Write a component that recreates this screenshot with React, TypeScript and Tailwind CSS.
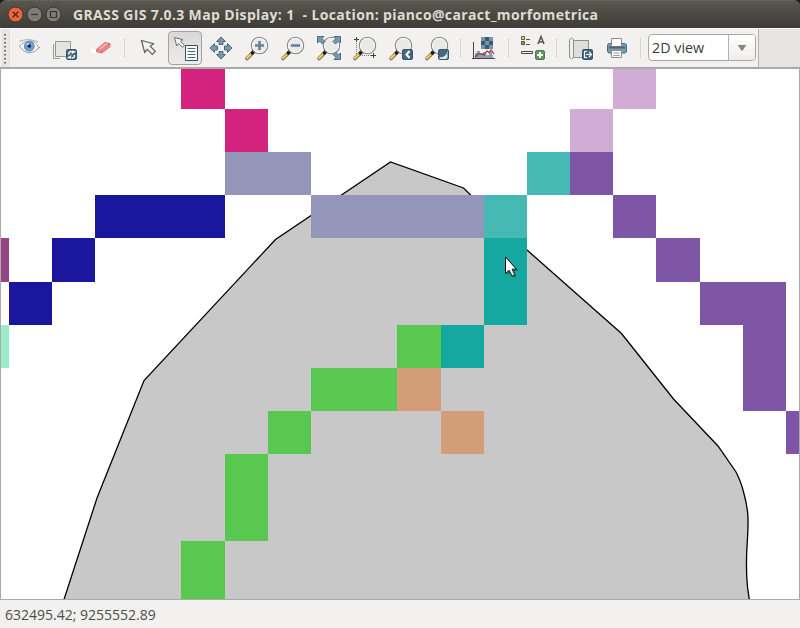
import React from "react";

type Cell = [number, number, number, number, string];

const cells: Cell[] = [
  [181, 69, 44, 40, "#d3237f"],
  [225, 109, 43, 43, "#d3237f"],
  [225, 152, 86, 43, "#9395b9"],
  [311, 195, 173, 43, "#9395b9"],
  [95, 195, 130, 43, "#1b169e"],
  [52, 238, 43, 44, "#1b169e"],
  [9, 282, 43, 43, "#1b169e"],
  [1, 238, 8, 44, "#964283"],
  [1, 325, 8, 43, "#9aebca"],
  [484, 195, 43, 43, "#46b9b4"],
  [527, 152, 43, 43, "#46b9b4"],
  [484, 238, 43, 87, "#14a8a0"],
  [441, 325, 43, 43, "#14a8a0"],
  [397, 325, 44, 43, "#58c850"],
  [311, 368, 86, 43, "#58c850"],
  [268, 411, 43, 43, "#58c850"],
  [225, 454, 43, 87, "#58c850"],
  [181, 541, 44, 58, "#58c850"],
  [397, 368, 44, 43, "#d49d79"],
  [441, 411, 43, 43, "#d49d79"],
  [613, 69, 43, 40, "#d1add6"],
  [570, 109, 43, 43, "#d1add6"],
  [570, 152, 43, 43, "#7f55a6"],
  [613, 195, 43, 43, "#7f55a6"],
  [656, 238, 44, 44, "#7f55a6"],
  [700, 282, 86, 43, "#7f55a6"],
  [743, 325, 43, 86, "#7f55a6"],
  [786, 411, 13, 43, "#7f55a6"],
];

function MapCanvas() {
  return (
    <svg className="block h-[530px] w-[798px]" viewBox="1 69 798 530">
      <path
        d="M63.5 601L97 498L144 380.500L275.500 239.500L390.500 162L463.500 188L527 250L621.500 333.500L673.500 399L718 446L736 472Q741 482 743 490C749 511 748.500 521 747.500 538C746 558 746.500 577 747.500 587L749.500 601"
        fill="#c8c8c8"
        stroke="#000"
        strokeWidth="1.3"
      />
      {cells.map(([x, y, w, h, c]) => (
        <rect key={`${x}-${y}`} x={x} y={y} width={w} height={h} fill={c} shapeRendering="crispEdges" />
      ))}
      <path d="M507 258v17l3.500-3l3 5.500l3-1.500l-2.500-5h4.500z" fill="#000" opacity=".3" />
      <path d="M505.500 257v16.500l3.700-3.200l2.800 5.700l2.800-1.300l-2.700-5.500h4.300z" fill="#fff" stroke="#111" strokeWidth="1" />
    </svg>
  );
}

/* Each tool draws in window coordinates; x is the left edge of its slot. */
function Tool({ x, children }: { x: number; children: React.ReactNode }) {
  return (
    <svg className="block h-[38px] w-9 shrink-0" viewBox={`${x} 29 36 38`}>
      {children}
    </svg>
  );
}

function Separator() {
  return (
    <div className="flex h-[38px] w-3 shrink-0 items-center pl-[5px]">
      <div className="h-5 w-px bg-[#d6d5d3]" />
    </div>
  );
}

function Lens({ cx, children }: { cx: number; children?: React.ReactNode }) {
  return (
    <>
      <path d={`M${cx - 12.5} 58.500l6.500-6.500`} stroke="#6a665c" strokeWidth="3.600" strokeLinecap="round" />
      <path d={`M${cx - 12.5} 58.300l5-5`} stroke="#f6cf45" strokeWidth="2.200" strokeLinecap="round" />
      <path d={`M${cx - 7.2} 53l1.400-1.400`} stroke="#1c1c1c" strokeWidth="3.400" strokeLinecap="round" />
      <circle cx={cx} cy="45.500" r="8.200" fill="#e9e9e8" stroke="#858583" strokeWidth="1.100" />
      <circle cx={cx} cy="45.500" r="7" fill="none" stroke="#fafafa" strokeWidth="1" />
      {children}
    </>
  );
}

function Badge({ x, y, children }: { x: number; y: number; children: React.ReactNode }) {
  return (
    <g>
      <rect x={x} y={y} width="10" height="10" rx="1.500" fill="#466980" stroke="#34566c" />
      {children}
    </g>
  );
}

const blue = { fill: "#7899ae", stroke: "#4a6c82", strokeWidth: 1 };

function Toolbar() {
  return (
    <div className="flex h-10 border-t border-b border-t-[#fbfbfa] border-b-[#aaa9a7] bg-[#e5e4e2]">
      <div className="flex h-[38px] w-[759px] border-r border-[#b5b4b2] bg-[#f2f1f0]">
        <svg className="block h-[38px] w-[11px] shrink-0" viewBox="0 29 11 38">
          <path d="M1 29h9v38H1z" fill="#e6e5e3" />
          <path d="M5 34v30" stroke="#6b6b69" strokeWidth="2" strokeDasharray="1.500 2.500" />
        </svg>
        <Tool x={11}>
          <path d="M19.500 47q3-5.500 9.500-6q7 0 10 6.500q-9.500 9.500-19.500-.5z" fill="#fff" />
          <path d="M19.300 41.500q9-4 18.700.5" fill="none" stroke="#a2a2a1" strokeWidth=".9" />
          <path d="M19 47q4-5.700 10-6q6.500 0 9.300 6l1.900.8M19.300 46q9 13 20 1.700" fill="none" stroke="#8f8f8e" strokeWidth=".9" />
          <circle cx="29.300" cy="46.300" r="5" fill="#6a9dd6" stroke="#4a7db8" strokeWidth=".7" />
          <circle cx="29.300" cy="46" r="1.800" fill="#14243a" />
          <circle cx="27.700" cy="44.300" r="1" fill="#dcecff" />
        </Tool>
        <Tool x={47}>
          <path d="M53.500 44v14.500H60" fill="none" stroke="#999" />
          <path d="M55.500 41.500h15v15h-15z" fill="#e4e4e3" stroke="#949492" />
          <Badge x={66.500} y={49.500}>
            <path d="M68.800 54.500q-.5-3 3-3M74.500 55q.5 3-3 3" fill="none" stroke="#fff" strokeWidth="1.400" />
            <path d="M71.500 54.300v-3.800h3.800zM71.500 55v3.800h-3.800z" fill="#fff" transform="rotate(12 71.500 54.500)" />
          </Badge>
        </Tool>
        <Tool x={83}>
          <path d="M91 49h9v4h-9z" fill="#fff" />
          <path d="M96.500 49.500l8.500-7l5 1.200v3l-8 6.300l-5.500-1.200z" fill="#ec9290" stroke="#d96c6c" />
          <path d="M97 49.500l5 1.200v2.300M102 50.500l8-6.500" fill="none" stroke="#d96c6c" strokeWidth=".8" />
          <path d="M99.500 49l7-5.500" stroke="#fbd0cf" />
        </Tool>
        <Separator />
        <Tool x={131}>
          <path d="M141.500 40.500l12 3.200l-3.200 2.600l5 5l-3 3l-5-5l-2.600 3.200z" fill="#f3f3f2" stroke="#5c5c5a" strokeWidth="1.200" />
        </Tool>
        <div className="flex h-[38px] w-9 shrink-0 items-center justify-center">
          <div className="flex h-[34px] w-[34px] items-center justify-center overflow-hidden rounded border border-[#a5a39f] bg-linear-to-b from-[#d9d8d5] to-[#edecea]">
            <svg className="block h-[38px] w-9 shrink-0" viewBox="167 29 36 38">
              <path d="M174.500 37.500l8.500 2.200l-2.300 1.800l3.800 3.800l-2 2l-3.800-3.800l-2 2.500z" fill="#f3f3f2" stroke="#6c6c6a" />
              <path d="M185.500 45.500h12v15h-12z" fill="#fff" stroke="#2f536a" />
              <path d="M187.500 48.500h8m-8 3h8m-8 3h8m-8 3h8" stroke="#466a83" />
            </svg>
          </div>
        </div>
        <Tool x={203}>
          <g {...blue}>
            <path d="M221 37l4.500 4.500h-2.500v3h-4v-3h-2.500z" />
            <path d="M221 59l4.500-4.500h-2.500v-3h-4v3h-2.500z" />
            <path d="M210 48l4.500-4.500v2.500h3v4h-3v2.500z" />
            <path d="M232 48l-4.500-4.500v2.500h-3v4h3v2.500z" />
          </g>
        </Tool>
        <Tool x={239}>
          <Lens cx={259.500}><path d="M255 45.500h9M259.500 41v9" stroke="#618399" strokeWidth="2.600" /></Lens>
        </Tool>
        <Tool x={275}>
          <Lens cx={295.500}><path d="M291 45.500h9" stroke="#618399" strokeWidth="2.600" /></Lens>
        </Tool>
        <Tool x={311}>
          <Lens cx={331.500} />
          <g {...blue}>
            <path d="M317.500 36.500h6.500l-2 2l3 3l-2.500 2.500l-3-3l-2 2z" />
            <path d="M340.500 36.500h-6.500l2 2l-3 3l2.500 2.500l3-3l2 2z" />
            <path d="M340.500 59.500h-6.500l2-2l-3-3l2.500-2.500l3 3l2-2z" />
          </g>
        </Tool>
        <Tool x={347}>
          <path d="M356.500 43v12.500H371" fill="none" stroke="#777" strokeDasharray="1 1" />
          <Lens cx={367.500} />
          <path d="M354 39.500h5M356.500 37v5M371 55.500h5M373.500 53v5" stroke="#3d3d3d" />
        </Tool>
        <Tool x={383}>
          <Lens cx={403.500} />
          <Badge x={402.500} y={49.500}><path d="M409.500 51l-3 3.500l3 3.500" fill="none" stroke="#fff" strokeWidth="2" /></Badge>
        </Tool>
        <Tool x={419}>
          <Lens cx={439.500} />
          <Badge x={438.500} y={49.500}><path d="M439.500 57.500q7 0 8-7v6q0 2.500-2.500 2.500h-5.500z" fill="#e0e8ed" /></Badge>
        </Tool>
        <Separator />
        <Tool x={467}>
          <path d="M481 37h12v12h-12z" fill="#7894a7" />
          <path d="M485 37h4v4h-4zM489 41h4v4h-4zM481 41h4v4h-4zM485 45h4v4h-4z" fill="#385a70" />
          <path d="M475 58v-5h2v-2h3v2h3v-1h3v3h3v-3h3v3h1v3z" fill="#86a1b4" />
          <path d="M473.500 42v17M472 58.500h23" stroke="#444" />
          <path d="M475 57l3-3h4l2 1l3-4l2 1.500l2-2.500l3 4" fill="none" stroke="#b51e2d" strokeWidth="1.200" />
        </Tool>
        <Separator />
        <Tool x={515}>
          <path d="M521.500 36.500h3v3h-3z" fill="#f5e636" stroke="#555" />
          <path d="M521.500 41.500h3v3h-3z" fill="#dd6e67" stroke="#555" />
          <path d="M526 39.500h4M526 44.500h4" stroke="#555" />
          <path d="M521.500 51.500h11v2h-11z" fill="#fff" stroke="#444" />
          <path d="M538 44l3-7.300l3 7.300M539 42h4" fill="none" stroke="#5a5a58" strokeWidth="1.600" />
          <rect x="535.500" y="50.500" width="9" height="9" rx="1.500" fill="#5f9760" stroke="#4b7f4e" />
          <path d="M537 55h6M540 52v6" stroke="#fff" strokeWidth="2" />
        </Tool>
        <Separator />
        <Tool x={563}>
          <path d="M573 40.500h15.500v17H572z" fill="#dededc" stroke="#8e8e8c" />
          <path d="M569.500 57.500v-18q2-3 4 0v18q-2 2.500-4 0z" fill="#eeeeec" stroke="#8e8e8c" />
          <Badge x={582.500} y={49.500}><path d="M587 51.500h-2.500v6h2.500M586 54.500h5M589 52l2.500 2.500l-2.500 2.500" fill="none" stroke="#fff" strokeWidth="1.100" /></Badge>
        </Tool>
        <Tool x={599}>
          <rect x="607.500" y="43.500" width="19" height="9.500" rx="2" fill="#7b9bae" stroke="#4b687b" />
          <path d="M611.500 46.500v-8h10v8z" fill="#fff" stroke="#8d8d8b" />
          <path d="M609 47.500h16" stroke="#486579" strokeWidth="2" />
          <path d="M611.500 50.500h10v7h-10z" fill="#fff" stroke="#8d8d8b" />
          <path d="M613.500 53h6m-6 2.500h6" stroke="#999" />
        </Tool>
        <Separator />
        <div className="mt-[5px] ml-px flex h-[27px] w-[108px] overflow-hidden rounded border border-[#aaa8a5] bg-white">
          <div className="flex w-[80px] items-center border-r border-[#b5b3b0] pl-[3px] font-['Open_Sans',sans-serif] text-[14.300px] text-[#3c3c3c]">2D view</div>
          <div className="flex flex-1 items-center justify-center bg-linear-to-b from-white to-[#eeedeb]">
            <svg className="mt-px h-[6px] w-2" viewBox="0 0 8 6"><path d="M.5.5h7L4 5.500z" fill="#888" stroke="#666" strokeWidth=".7" /></svg>
          </div>
        </div>
      </div>
    </div>
  );
}

function TitleBar() {
  return (
    <div className="flex h-7 items-center rounded-t-md border-t border-[#66645c] bg-linear-to-b from-[#59574f] to-[#3d3c38]">
      <svg className="block h-[27px] w-[73px] shrink-0" viewBox="0 1 73 27">
        <circle cx="15.500" cy="14.500" r="7.500" fill="#ee6537" stroke="#373631" />
        <path d="M12.700 11.700l5.600 5.600m0-5.600l-5.600 5.600" stroke="#40281f" strokeWidth="1.300" />
        <circle cx="34.500" cy="14.500" r="7.500" fill="#7d7b74" stroke="#34332f" />
        <path d="M31 14.500h7" stroke="#35342f" strokeWidth="1.200" />
        <circle cx="53.500" cy="14.500" r="7.500" fill="#7d7b74" stroke="#34332f" />
        <path d="M50.500 11.500h6v6h-6z" fill="none" stroke="#35342f" strokeWidth="1.200" />
      </svg>
      <span className="mb-px font-['Open_Sans',sans-serif] text-[14px] font-bold tracking-[0.360px] whitespace-pre text-[#dfdbd2]">
        {"GRASS GIS 7.0.3 Map Display: 1  - Location: pianco@caract_morfometrica"}
      </span>
    </div>
  );
}

export default function App() {
  return (
    <div className="flex h-[628px] w-[800px] flex-col overflow-hidden bg-[#f2f1f0]">
      <div className="bg-[#1c1c19]"><TitleBar /></div>
      <Toolbar />
      <div className="h-[532px] border border-[#acaaa8] bg-white">
        <MapCanvas />
      </div>
      <div className="flex flex-1 items-center pl-[5px] font-['Open_Sans',sans-serif] text-[14px] text-[#4c4c4c]">
        632495.42; 9255552.89
      </div>
    </div>
  );
}
